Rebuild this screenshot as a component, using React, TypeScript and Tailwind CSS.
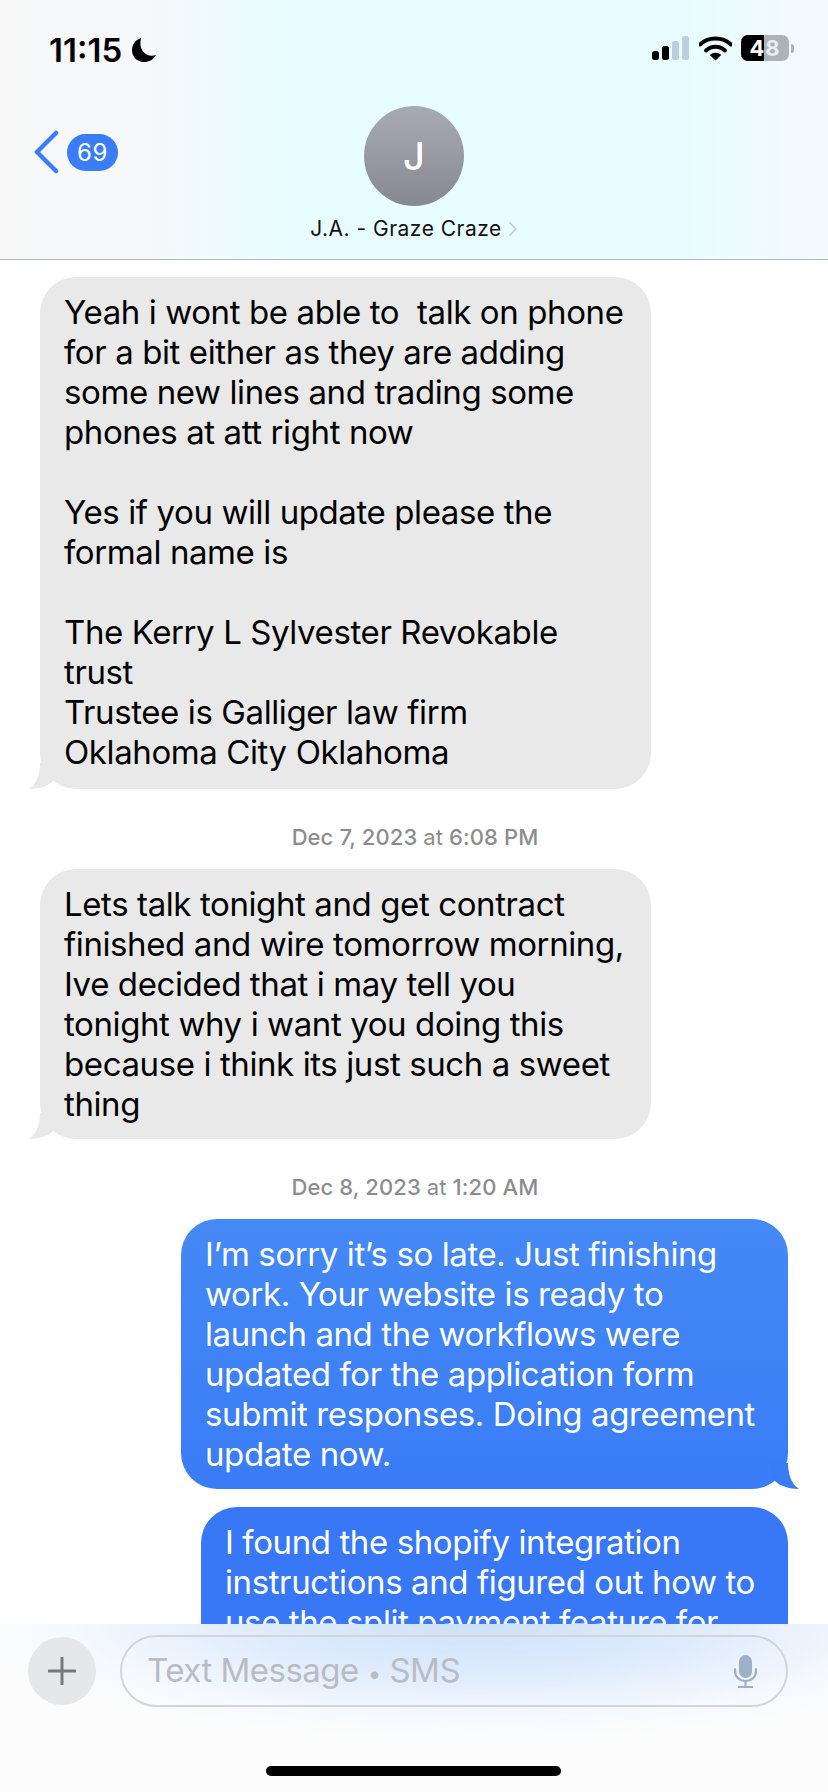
const bodyFont = "font-['Inter','Liberation_Sans',sans-serif]"

function Tail({ side, color }: { side: 'left' | 'right'; color: string }) {
  if (side === 'left') {
    return (
      <svg className="absolute left-[-11px] bottom-0" width="30" height="26" viewBox="0 0 30 26">
        <path d="M11 0 C11 10 8 21 0 26 C6 26 12 25 16 23 C19 22 22 20 24 18 L30 0 Z" fill={color} />
      </svg>
    )
  }
  return (
    <svg className="absolute right-[-11px] bottom-0" width="30" height="26" viewBox="0 0 30 26">
      <path d="M19 0 C19 10 22 21 30 26 C24 26 18 25 14 23 C11 22 8 20 6 18 L0 0 Z" fill={color} />
    </svg>
  )
}

function Lines({ lines }: { lines: string[] }) {
  return (
    <>
      {lines.map((line, i) => (
        <div key={i} className="h-[40px] whitespace-pre">
          {line}
        </div>
      ))}
    </>
  )
}

function Received({ lines, tall = false }: { lines: string[]; tall?: boolean }) {
  return (
    <div
      className={`relative ml-[40px] w-[611px] rounded-[36px] bg-[#e9e9e9] pl-[24px] pt-[15px] text-[33px] leading-[40px] tracking-[-0.4px] text-black ${
        tall ? 'pb-[17px]' : 'pb-[15px]'
      }`}
    >
      <Tail side="left" color="#e9e9e9" />
      <div className="relative">
        <Lines lines={lines} />
      </div>
    </div>
  )
}

function Stamp({ date, time }: { date: string; time: string }) {
  return (
    <div className="flex h-[80px] items-start justify-center pt-[35px] pl-[2px]">
      <span className="text-[22px] leading-[26px] font-medium tracking-[0.1px] text-[#8c8c90]">
        {date} <span className="font-normal">at</span> {time}
      </span>
    </div>
  )
}

function StatusBar() {
  return (
    <div className="flex h-[106px] items-start justify-between pl-[49px] pr-[34px] pt-[31px]">
      <div className="flex items-center gap-[9px]">
        <span className="text-[33px] leading-[38px] font-semibold text-black">11:15</span>
        <svg width="26" height="26" viewBox="0 0 26 26">
          <path d="M10 1 C4 3 1 8 1 13 C1 20 6 25 13 25 C18 25 22 23 25 18 C16 21 7 14 10 1 Z" fill="#000" />
        </svg>
      </div>
      <div className="flex items-center gap-[9px] pt-[4px]">
        <svg width="38" height="24" viewBox="0 0 38 24">
          <rect x="0" y="15" width="7" height="9" rx="2.5" fill="#000" />
          <rect x="10" y="10" width="7" height="14" rx="2.5" fill="#000" />
          <rect x="20" y="5" width="7" height="19" rx="2.5" fill="#bccfdc" />
          <rect x="30" y="0" width="7" height="24" rx="2.5" fill="#bccfdc" />
        </svg>
        <svg width="33" height="25" viewBox="0 0 33 25">
          <path d="M1 8.5 C9.5 0.5 23.5 0.5 32 8.5" fill="none" stroke="#000" strokeWidth="4" strokeLinecap="round" />
          <path d="M7 14.5 C12.5 9.5 20.5 9.5 26 14.5" fill="none" stroke="#000" strokeWidth="4" strokeLinecap="round" />
          <path d="M16.5 24.5 L10.8 19 C14 16 19 16 22.2 19 Z" fill="#000" />
        </svg>
        <div className="flex items-center gap-[2px]">
          <div className="relative flex h-[26px] w-[48px] items-center justify-center overflow-hidden rounded-[7px] bg-[#a9b3b8]">
            <div className="absolute inset-y-0 left-0 w-[23px] bg-black" />
            <span className="relative text-[22px] leading-[26px] font-bold tracking-[1px] text-white">
              4<span className="text-[#e6ecef]">8</span>
            </span>
          </div>
          <div className="h-[9px] w-[3px] rounded-r-full bg-[#a9b3b8]" />
        </div>
      </div>
    </div>
  )
}

function Header() {
  return (
    <div className="h-[260px] shrink-0 border-b border-b-[#b4b8ba] bg-[linear-gradient(90deg,#f8f8f8_0%,#f6f8fb_18%,#e8fdff_36%,#e8fdff_82%,#f5f9fe_100%)]">
      <StatusBar />
      <div className="grid grid-cols-[1fr_auto_1fr]">
        <div className="flex items-start gap-[7px] pl-[32px] pt-[24px]">
          <svg width="28" height="44" viewBox="0 0 28 44">
            <path d="M24 3 L5 22 L24 41" fill="none" stroke="#3a7df6" strokeWidth="4.5" strokeLinecap="round" strokeLinejoin="round" />
          </svg>
          <div className="mt-[4px] flex h-[37px] w-[51px] items-center justify-center rounded-full bg-[#3a7df6] text-[24px] leading-none tracking-[0.5px] text-white">
            69
          </div>
        </div>
        <div className="flex flex-col items-center">
          <div className="flex h-[100px] w-[100px] items-center justify-center rounded-full bg-[linear-gradient(180deg,#a8aab4,#868892)] text-[38px] font-medium text-white">
            J
          </div>
          <div className="mt-[10px] flex items-center gap-[6px]">
            <span className="text-[21px] leading-[26px] tracking-[0.5px] text-[#111]">J.A. - Graze Craze</span>
            <svg width="10" height="16" viewBox="0 0 10 16">
              <path d="M1.5 1.5 L8 8 L1.5 14.5" fill="none" stroke="#c3ccd4" strokeWidth="1.6" />
            </svg>
          </div>
        </div>
        <div />
      </div>
    </div>
  )
}

function Composer() {
  return (
    <div className="relative flex h-[168px] shrink-0 items-start gap-[24px] pl-[28px] pr-[40px] pt-[11px] bg-[radial-gradient(ellipse_62%_70%_at_58%_0%,#cde1fb_0%,#e0ecfc_45%,#f6f9fe_80%,#fcfcfc_100%)]">
      <div className="mt-[2px] flex h-[68px] w-[68px] shrink-0 items-center justify-center rounded-full bg-[#e6e7e9]">
        <svg width="28" height="28" viewBox="0 0 28 28">
          <path d="M14 1 V27 M1 14 H27" stroke="#77787c" strokeWidth="3" strokeLinecap="round" />
        </svg>
      </div>
      <div className="flex h-[72px] flex-1 items-center justify-between rounded-full border-2 border-[#d2d5da] pl-[25px] pr-[28px]">
        <span className="pt-[2px] text-[33px] leading-[40px] tracking-[-0.5px] text-[#b9bcc4]">
          Text Message <span className="text-[24px]">•</span> SMS
        </span>
        <svg width="25" height="33" viewBox="0 0 25 33">
          <rect x="6" y="0" width="13" height="23" rx="6.5" fill="#9fafc6" />
          <path d="M2 14 V16 C2 22 6.5 26 12.5 26 C18.5 26 23 22 23 16 V14" fill="none" stroke="#9fafc6" strokeWidth="2.2" strokeLinecap="round" />
          <path d="M12.5 26 V31 M5 32 H20" stroke="#9fafc6" strokeWidth="2.2" />
        </svg>
      </div>
      <div className="absolute bottom-[16px] left-[266px] h-[10px] w-[295px] rounded-full bg-black" />
    </div>
  )
}

export default function App() {
  return (
    <div className={`flex h-[1792px] w-[828px] flex-col overflow-hidden bg-white ${bodyFont}`}>
      <Header />
      <div className="min-h-0 flex-1 overflow-hidden pt-[17px]">
        <Received
          tall
          lines={[
            'Yeah i wont be able to  talk on phone',
            'for a bit either as they are adding',
            'some new lines and trading some',
            'phones at att right now',
            '',
            'Yes if you will update please the',
            'formal name is',
            '',
            'The Kerry L Sylvester Revokable',
            'trust',
            'Trustee is Galliger law firm',
            'Oklahoma City Oklahoma',
          ]}
        />
        <Stamp date="Dec 7, 2023" time="6:08 PM" />
        <Received
          lines={[
            'Lets talk tonight and get contract',
            'finished and wire tomorrow morning,',
            'Ive decided that i may tell you',
            'tonight why i want you doing this',
            'because i think its just such a sweet',
            'thing',
          ]}
        />
        <Stamp date="Dec 8, 2023" time="1:20 AM" />
        <div className="relative ml-[181px] w-[607px] rounded-[36px] bg-[linear-gradient(180deg,#4589f5,#3a7cf6)] pl-[24px] pt-[15px] pb-[15px] text-[33px] leading-[40px] tracking-[-0.4px] text-white">
          <Tail side="right" color="#3a7cf6" />
          <div className="relative">
            <Lines
              lines={[
                'I’m sorry it’s so late. Just finishing',
                'work. Your website is ready to',
                'launch and the workflows were',
                'updated for the application form',
                'submit responses. Doing agreement',
                'update now.',
              ]}
            />
          </div>
        </div>
        <div className="ml-[201px] mt-[18px] w-[587px] rounded-[36px] bg-[#3878f6] pl-[24px] pt-[15px] pb-[15px] text-[33px] leading-[40px] tracking-[-0.4px] text-white">
          <Lines
            lines={[
              'I found the shopify integration',
              'instructions and figured out how to',
              'use the split payment feature for',
            ]}
          />
        </div>
      </div>
      <Composer />
    </div>
  )
}
